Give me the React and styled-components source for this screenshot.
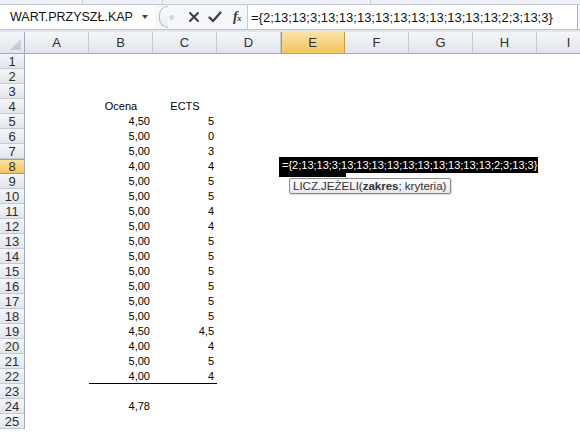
import React from 'react';
import styled, { createGlobalStyle, css } from 'styled-components';

const Global = createGlobalStyle`
  html, body { margin: 0; padding: 0; background: #fff; }
  body { font-family: "Liberation Sans", Arial, sans-serif; }
`;

const Window = styled.div`
  width: 580px;
  height: 434px;
  overflow: hidden;
  background: #fff;
  display: flex;
  flex-direction: column;
`;

const RibbonEdge = styled.div`
  height: 4px;
  display: flex;
  background: #eef1f5;
  border-bottom: 1px solid #c3c9d2;
`;

const RibbonGroup = styled.div`
  flex: 0 0 ${p => p.w}px;
  border-right: 1px solid #c8cdd5;
`;

const FormulaBar = styled.div`
  height: 24px;
  display: flex;
  align-items: stretch;
  background: #f5f7fa;
  border-bottom: 1px solid #b9c0ca;
`;

const NameBox = styled.div`
  flex: 0 0 155px;
  display: flex;
  align-items: center;
  justify-content: space-between;
  background: #fff;
  padding: 0 4px 0 10px;
  box-sizing: border-box;
  font-size: 12.5px;
  color: #111;
`;

const DropArrow = styled.span`
  width: 0;
  height: 0;
  border-left: 3.5px solid transparent;
  border-right: 3.5px solid transparent;
  border-top: 4px solid #444;
  margin-right: 3px;
`;

const Controls = styled.div`
  flex: 0 0 88px;
  display: flex;
  align-items: center;
  position: relative;
  padding-left: 4px;
  box-sizing: border-box;
`;

const Grip = styled.div`
  width: 8px;
  height: 20px;
  border: 1px solid #b7bec8;
  border-right: none;
  border-radius: 10px 0 0 10px;
  background: linear-gradient(#fbfcfd, #e6eaef);
  display: flex;
  align-items: center;
  justify-content: flex-end;
`;

const GripDot = styled.span`
  width: 5px;
  height: 5px;
  border-radius: 50%;
  background: #d2d6dc;
  margin-right: -6px;
`;

const IconButton = styled.div`
  width: 20px;
  height: 20px;
  display: flex;
  align-items: center;
  justify-content: center;
  margin-left: ${p => p.ml || 0}px;
`;

const Fx = styled.span`
  font-family: "Liberation Serif", "Times New Roman", serif;
  font-style: italic;
  font-weight: bold;
  font-size: 14px;
  color: #3a3a3a;
  letter-spacing: -0.5px;
  & sub {
    font-size: 9px;
    vertical-align: baseline;
  }
`;

const FormulaInput = styled.div`
  flex: 1;
  background: #fff;
  border-left: 1px solid #c5cbd3;
  border-right: 1px solid #a9b1bc;
  margin-right: 2px;
  display: flex;
  align-items: center;
  padding-left: 3px;
  font-size: 13px;
  color: #111;
  white-space: nowrap;
  overflow: hidden;
`;

const BarGap = styled.div`
  height: 2px;
  background: #e4e8ee;
`;

const Sheet = styled.div`
  display: flex;
  flex-direction: column;
`;

const HeaderRow = styled.div`
  display: flex;
  height: 21px;
  border-bottom: 1px solid #9eaabb;
`;

const headerBase = css`
  box-sizing: border-box;
  display: flex;
  align-items: center;
  justify-content: center;
  font-size: 13px;
  color: #2f2f2f;
  background: ${p => (p.hl ? 'linear-gradient(#fbe3a8, #f4c55e)' : 'linear-gradient(#f4f6f9, #e1e6ec)')};
`;

const Corner = styled.div`
  ${headerBase};
  flex: 0 0 25px;
  border-right: 1px solid #9eaabb;
  position: relative;
`;

const CornerTri = styled.span`
  position: absolute;
  right: 3px;
  bottom: 3px;
  width: 0;
  height: 0;
  border-left: 11px solid transparent;
  border-bottom: 11px solid #c8ced6;
`;

const ColHeader = styled.div`
  ${headerBase};
  flex: 0 0 64px;
  border-right: 1px solid ${p => (p.hl ? '#c29b49' : '#c3cad4')};
  ${p => p.hl && css`box-shadow: inset 1px 0 0 #c29b49;`}
`;

const Row = styled.div`
  display: flex;
  height: 15px;
`;

const RowHeader = styled.div`
  ${headerBase};
  flex: 0 0 25px;
  font-size: 13px;
  line-height: 15px;
  border-right: 1px solid #9eaabb;
  border-bottom: 1px solid ${p => (p.hl ? '#c29b49' : '#c3cad4')};
  ${p => p.hl && css`box-shadow: inset 0 1px 0 #c29b49;`}
`;

const Cell = styled.div`
  flex: 0 0 64px;
  box-sizing: border-box;
  position: relative;
  font-size: 11px;
  line-height: 15px;
  color: #000;
  white-space: nowrap;
  padding: 0 3px;
  text-align: ${p => p.align || 'left'};
  ${p => p.under && css`border-bottom: 1px solid #000;`}
`;

const ActiveBox = styled.div`
  position: absolute;
  left: -2px;
  top: -2px;
  width: 67px;
  height: 20px;
  background: #000;
`;

const EditText = styled.div`
  position: absolute;
  left: 1px;
  top: -2px;
  height: 16px;
  line-height: 16px;
  background: #000;
  color: #fff;
  font-size: 11px;
  padding-right: 1px;
  white-space: nowrap;
  z-index: 2;
`;

const Tooltip = styled.div`
  position: absolute;
  left: 8px;
  top: 19px;
  height: 16px;
  line-height: 15px;
  box-sizing: border-box;
  padding: 0 4px 0 3px;
  font-size: 11.5px;
  color: #333;
  white-space: nowrap;
  background: linear-gradient(#ffffff, #e6e7ee);
  border: 1px solid #8a8a8a;
  border-radius: 2px;
  box-shadow: 1px 1px 1px rgba(0, 0, 0, 0.15);
  z-index: 3;
  & b {
    font-weight: bold;
  }
`;

const COLS = ['A', 'B', 'C', 'D', 'E', 'F', 'G', 'H', 'I'];
const FORMULA = '={2;13;13;3;13;13;13;13;13;13;13;13;13;13;2;3;13;3}';

const data = {
  4: { B: ['Ocena', 'center'], C: ['ECTS', 'center'] },
  5: { B: ['4,50'], C: ['5'] },
  6: { B: ['5,00'], C: ['0'] },
  7: { B: ['5,00'], C: ['3'] },
  8: { B: ['4,00'], C: ['4'] },
  9: { B: ['5,00'], C: ['5'] },
  10: { B: ['5,00'], C: ['5'] },
  11: { B: ['5,00'], C: ['4'] },
  12: { B: ['5,00'], C: ['4'] },
  13: { B: ['5,00'], C: ['5'] },
  14: { B: ['5,00'], C: ['5'] },
  15: { B: ['5,00'], C: ['5'] },
  16: { B: ['5,00'], C: ['5'] },
  17: { B: ['5,00'], C: ['5'] },
  18: { B: ['5,00'], C: ['5'] },
  19: { B: ['4,50'], C: ['4,5'] },
  20: { B: ['4,00'], C: ['4'] },
  21: { B: ['5,00'], C: ['5'] },
  22: { B: ['4,00', 'right', true], C: ['4', 'right', true] },
  24: { B: ['4,78'] },
};

const XIcon = () => (
  <svg width="12" height="12" viewBox="0 0 12 12">
    <path d="M2 2 L10 10 M10 2 L2 10" stroke="#3c3c3c" strokeWidth="2" strokeLinecap="round" />
  </svg>
);

const CheckIcon = () => (
  <svg width="14" height="12" viewBox="0 0 14 12">
    <path d="M1.5 6.5 L5 10 L12.5 1.5" stroke="#3c3c3c" strokeWidth="2.2" fill="none" strokeLinecap="round" strokeLinejoin="round" />
  </svg>
);

export default function App() {
  const rows = Array.from({ length: 25 }, (_, i) => i + 1);
  return (
    <>
      <Global />
      <Window>
        <RibbonEdge>
          <RibbonGroup w={82} />
          <RibbonGroup w={79} />
          <RibbonGroup w={207} />
        </RibbonEdge>
        <FormulaBar>
          <NameBox>
            <span>WART.PRZYSZŁ.KAP</span>
            <DropArrow />
          </NameBox>
          <Controls>
            <Grip>
              <GripDot />
            </Grip>
            <IconButton ml={16}>
              <XIcon />
            </IconButton>
            <IconButton ml={1}>
              <CheckIcon />
            </IconButton>
            <IconButton ml={2}>
              <Fx>
                f<sub>x</sub>
              </Fx>
            </IconButton>
          </Controls>
          <FormulaInput>{FORMULA}</FormulaInput>
        </FormulaBar>
        <BarGap />
        <Sheet>
          <HeaderRow>
            <Corner>
              <CornerTri />
            </Corner>
            {COLS.map(c => (
              <ColHeader key={c} hl={c === 'E'}>
                {c}
              </ColHeader>
            ))}
          </HeaderRow>
          {rows.map(r => (
            <Row key={r}>
              <RowHeader hl={r === 8}>{r}</RowHeader>
              {COLS.map(c => {
                const v = data[r] && data[r][c];
                const active = r === 8 && c === 'E';
                return (
                  <Cell key={c} align={v ? v[1] || 'right' : 'left'} under={v && v[2]}>
                    {v ? v[0] : ''}
                    {active && (
                      <>
                        <ActiveBox />
                        <EditText>{FORMULA}</EditText>
                        <Tooltip>
                          LICZ.JEŻELI(<b>zakres</b>; kryteria)
                        </Tooltip>
                      </>
                    )}
                  </Cell>
                );
              })}
            </Row>
          ))}
        </Sheet>
      </Window>
    </>
  );
}
